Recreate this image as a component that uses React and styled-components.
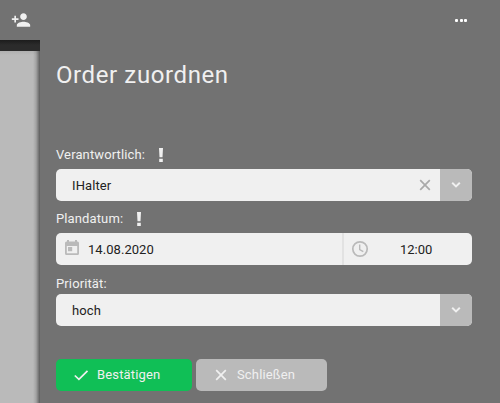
import React from "react";
import styled, { createGlobalStyle } from "styled-components";
import { MdPersonAdd } from "react-icons/md";

const GlobalStyle = createGlobalStyle`
  * { box-sizing: border-box; }
  body { margin: 0; background: #727272; }
`;

const Screen = styled.div`
  display: flex;
  width: 500px;
  height: 403px;
  overflow: hidden;
  background: #727272;
  color: #f0f0f0;
  font: 13px/16px Roboto, sans-serif;
`;

const Rail = styled.div`
  display: flex;
  flex-direction: column;
  width: 40px;
  flex: none;
`;

const RailTop = styled.div`
  height: 40px;
  padding: 10px 0 0 11px;
  color: #f0f0f0;
  svg { display: block; }
`;

const RailBar = styled.div`
  height: 11px;
  background: linear-gradient(#1c1c1c, #2b2b2b 5px, #2b2b2b);
`;

const RailPage = styled.div`
  flex: 1;
  background:
    linear-gradient(to right, transparent 33px, rgba(0, 0, 0, 0.12) 36px, rgba(0, 0, 0, 0.5) 40px),
    linear-gradient(#b0b0b0, #bababa 4px);
`;

const Panel = styled.main`
  display: flex;
  flex-direction: column;
  flex: 1;
  padding: 0 28px 0 16px;
`;

const MenuButton = styled.div`
  display: flex;
  align-self: flex-end;
  gap: 1.5px;
  height: 62px;
  padding: 19px 5px 0 0;
`;

const Dot = styled.span`
  width: 3px;
  height: 3px;
  border-radius: 1px;
  background: #fff;
`;

const Title = styled.h1`
  height: 84px;
  margin: 0;
  font-size: 24px;
  line-height: 26px;
  font-weight: 400;
  letter-spacing: 0.6px;
  white-space: nowrap;
`;

const Label = styled.div`
  display: flex;
  align-items: center;
  gap: 12px;
  height: ${(p) => p.$height}px;
  padding-bottom: ${(p) => p.$gap}px;
  letter-spacing: 0.12px;
  svg { display: block; }
`;

const Field = styled.div`
  display: flex;
  align-items: center;
  height: 32px;
  flex: none;
  margin-bottom: ${(p) => p.$after}px;
  border-radius: 5px;
  overflow: hidden;
  background: #f0f0f0;
  color: #222;
`;

const Value = styled.span`
  flex: 1;
  padding: 2px 0 0 16px;
  letter-spacing: 0.1px;
`;

const Clear = styled.span`
  display: flex;
  width: 24px;
  color: #aaa;
`;

const Drop = styled.span`
  display: flex;
  align-items: center;
  justify-content: center;
  width: 32px;
  height: 32px;
  background: #bababa;
`;

const DatePart = styled.span`
  display: flex;
  align-items: center;
  gap: 7px;
  width: 288px;
  height: 32px;
  padding-left: 7px;
  border-right: 2px solid #e2e2e2;
  svg { color: #bababa; margin-bottom: 2px; }
`;

const DateText = styled.span`
  padding-top: 2px;
  letter-spacing: 0.05px;
`;

const TimePart = styled.span`
  display: flex;
  align-items: center;
  flex: 1;
  padding-left: 7px;
  svg { color: #bababa; margin-bottom: 1px; }
`;

const Time = styled.span`
  margin-left: 31px;
  padding-top: 2px;
`;

const Actions = styled.div`
  display: flex;
  gap: 4px;
`;

const Button = styled.button`
  display: flex;
  align-items: center;
  gap: 7px;
  width: ${(p) => p.$width}px;
  height: 32px;
  padding: 0 0 0 16px;
  border: 0;
  border-radius: 5px;
  background: ${(p) => p.$color};
  color: #f0f0f0;
  font: inherit;
  letter-spacing: 0.15px;
`;

function Required() {
  return (
    <svg width="8" height="16" viewBox="0 0 8 16" fill="#f0f0f0">
      <path d="M2 1h4l-.5 9.3h-3zM2.2 11.700h3.600V15H2.200z" />
    </svg>
  );
}

function Chevron() {
  return (
    <svg width="10" height="8" viewBox="0 0 10 8" fill="none" stroke="#f0f0f0" strokeWidth="2">
      <path d="M1.2 1.8 5 5.4 8.8 1.8" />
    </svg>
  );
}

function Cross() {
  return (
    <svg width="18" height="18" viewBox="0 0 18 18" fill="none" stroke="currentColor" strokeWidth="1.7">
      <path d="M4.200 4.200 13.800 13.800M13.800 4.200 4.200 13.800" />
    </svg>
  );
}

function Check() {
  return (
    <svg width="18" height="18" viewBox="0 0 18 18" fill="none" stroke="currentColor" strokeWidth="1.7">
      <path d="M2.800 9.500 6.900 13.400 15.500 4.800" />
    </svg>
  );
}

function Clock() {
  return (
    <svg width="18" height="18" viewBox="0 0 18 18" fill="none" stroke="currentColor" strokeWidth="1.700">
      <circle cx="9" cy="9" r="7.200" />
      <path d="M8.700 4.500V9.500L12.300 11.600" strokeWidth="1.400" />
    </svg>
  );
}

function Calendar() {
  return (
    <svg width="18" height="18" viewBox="0 0 18 18" fill="currentColor">
      <path
        fillRule="evenodd"
        d="M4 1h2v1.500h6V1h2v1.500h.5Q16 2.500 16 4v10.500Q16 16 14.500 16h-11Q2 16 2 14.500V4Q2 2.500 3.500 2.500H4zM3.800 7v7.200h10.400V7zM5 8h4.200v4.200H5z"
      />
    </svg>
  );
}

export default function App() {
  return (
    <>
      <GlobalStyle />
      <Screen>
        <Rail>
          <RailTop><MdPersonAdd size={20} /></RailTop>
          <RailBar />
          <RailPage />
        </Rail>
        <Panel>
          <MenuButton><Dot /><Dot /><Dot /></MenuButton>
          <Title>Order zuordnen</Title>
          <Label $height={23} $gap={6}>Verantwortlich: <Required /></Label>
          <Field $after={9}>
            <Value>IHalter</Value>
            <Clear><Cross /></Clear>
            <Drop><Chevron /></Drop>
          </Field>
          <Label $height={23} $gap={6}>Plandatum: <Required /></Label>
          <Field $after={10}>
            <DatePart><Calendar /><DateText>14.08.2020</DateText></DatePart>
            <TimePart><Clock /><Time>12:00</Time></TimePart>
          </Field>
          <Label $height={19} $gap={2}>Priorität:</Label>
          <Field $after={33}>
            <Value>hoch</Value>
            <Drop><Chevron /></Drop>
          </Field>
          <Actions>
            <Button $width={136} $color="#10bf56"><Check />Bestätigen</Button>
            <Button $width={131} $color="#bababa"><Cross />Schließen</Button>
          </Actions>
        </Panel>
      </Screen>
    </>
  );
}
